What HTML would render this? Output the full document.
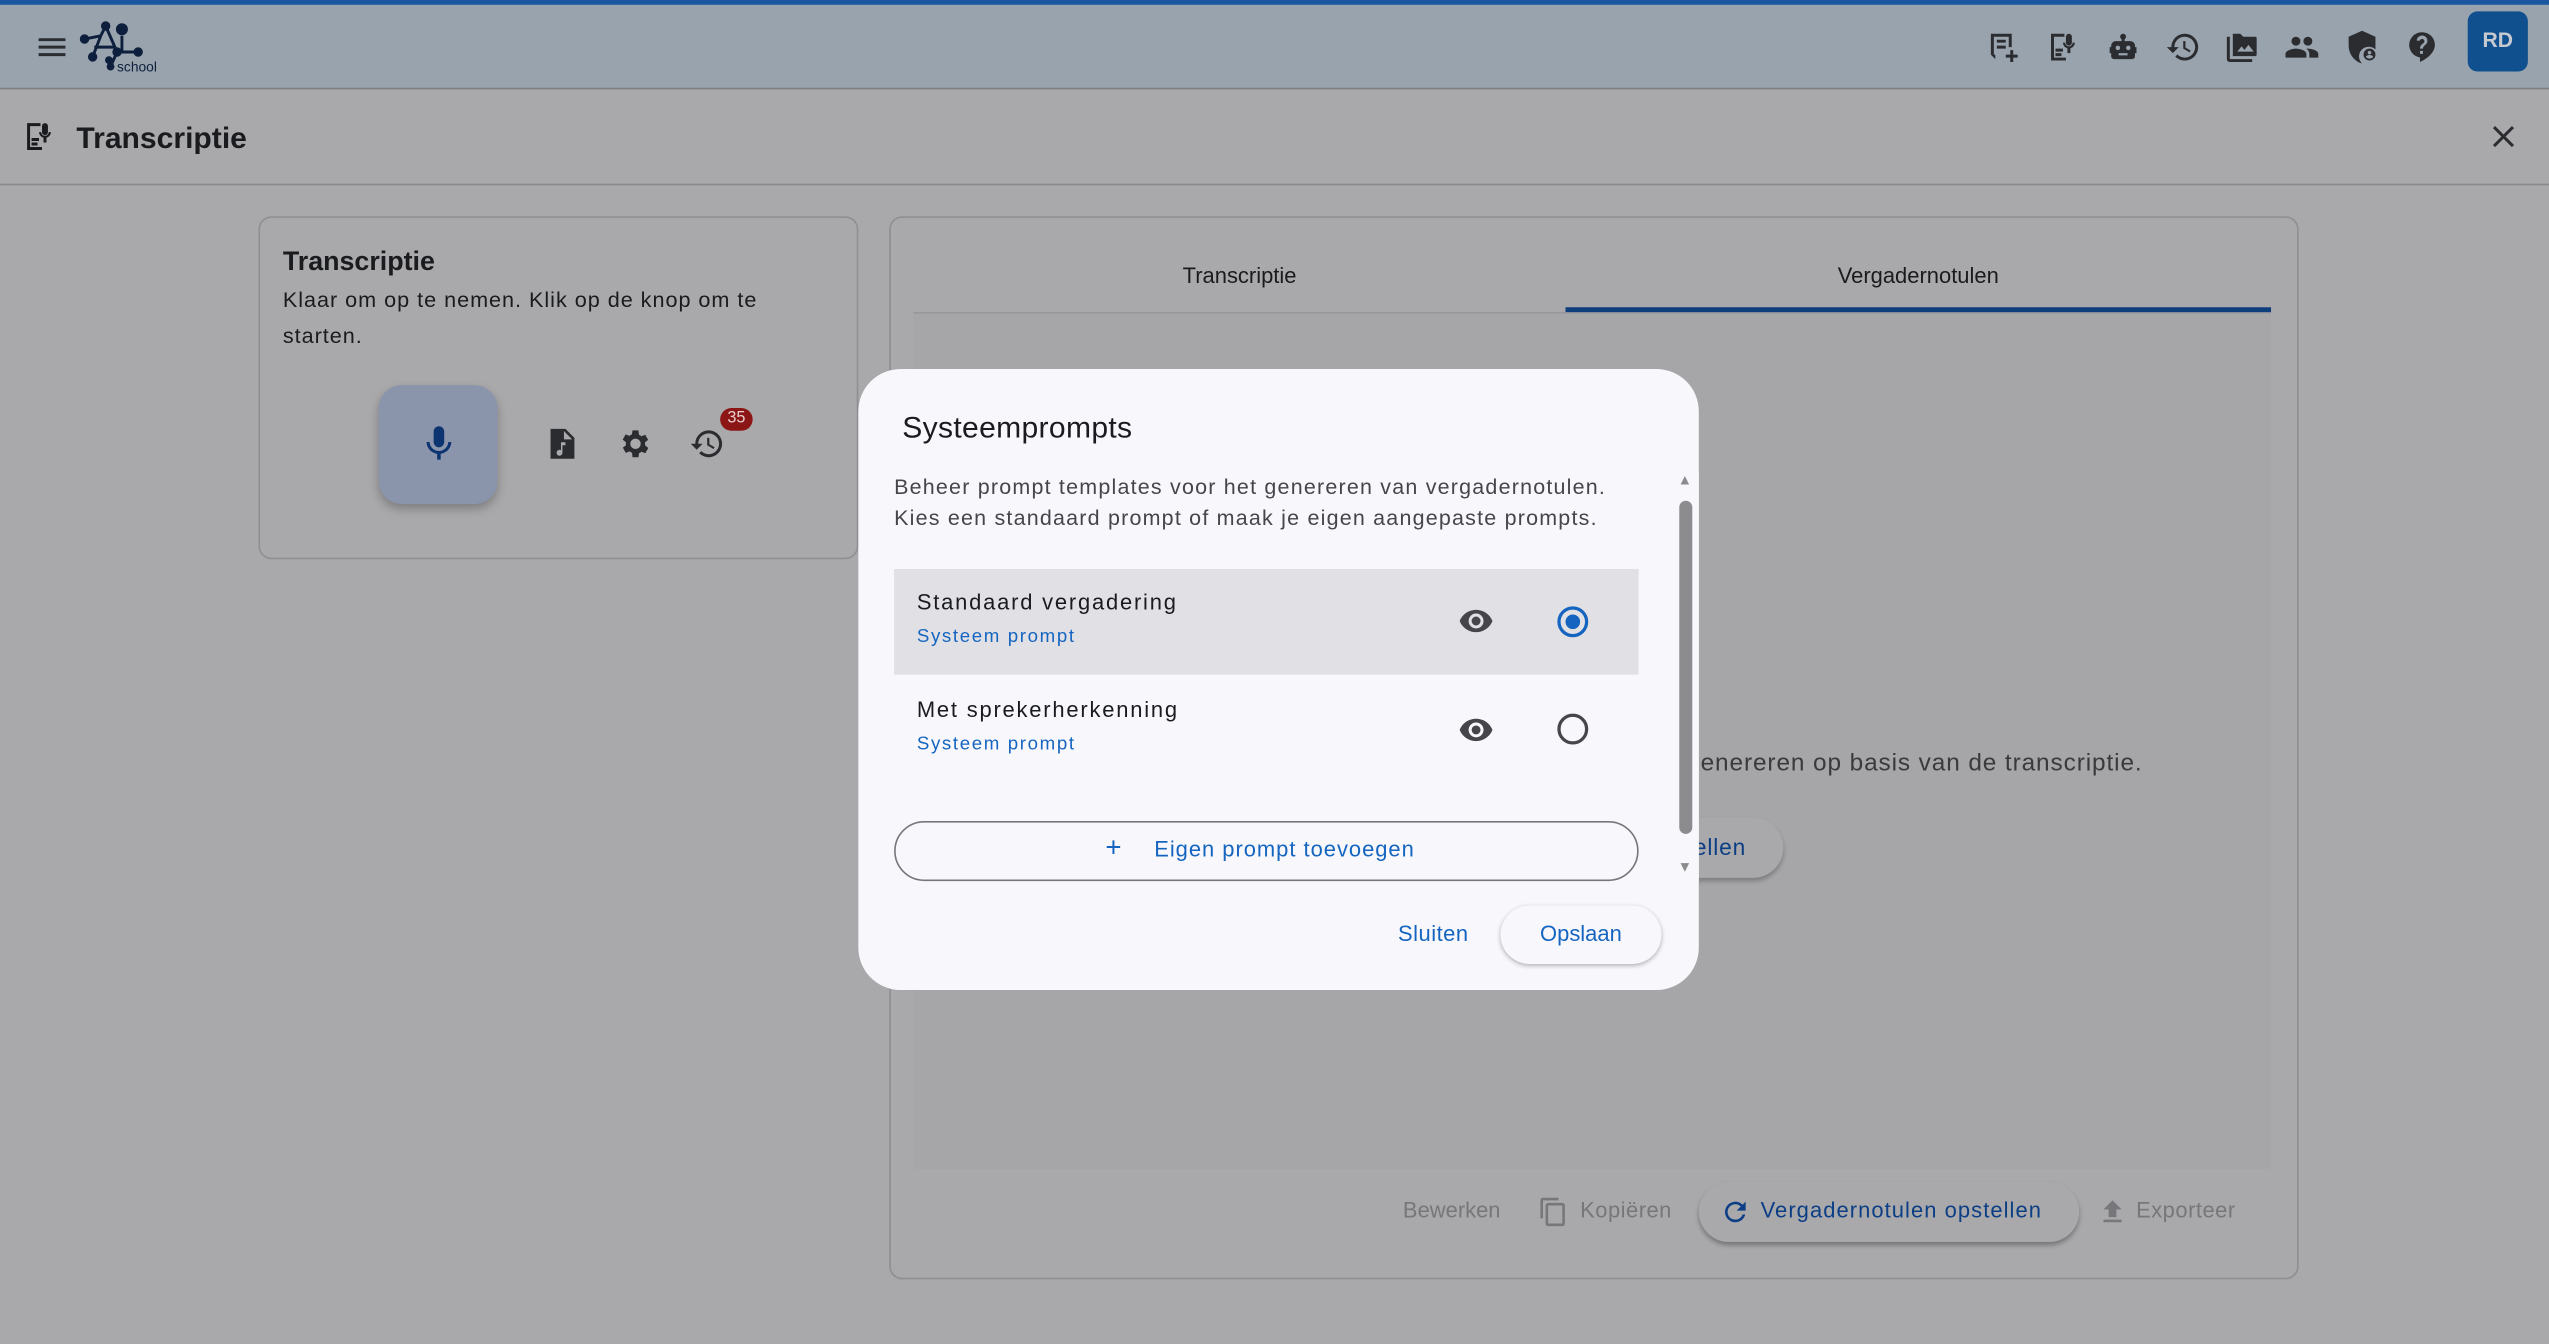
<!DOCTYPE html>
<html><head><meta charset="utf-8"><style>
*{box-sizing:border-box;margin:0;padding:0}
html,body{width:2549px;height:1344px;overflow:hidden;background:#a9a9ab;font-family:"Liberation Sans",sans-serif}
#w{position:absolute;left:0;top:0;width:1568px;height:827px;transform:scale(1.62564);transform-origin:0 0;background:#a9a9ab}
.a{position:absolute}
.ic{position:absolute;width:22px;height:22px;fill:#2b2c30}
.t{position:absolute;white-space:nowrap}
</style></head><body><div id="w">
<div class="a" style="left:0;top:0;width:1568px;height:3px;background:#1b56a1"></div>
<div class="a" style="left:0;top:3px;width:1568px;height:52px;background:#99a3ad;border-bottom:1px solid #7c7f84"></div>
<svg class="ic" style="left:21px;top:18px" viewBox="0 0 24 24"><path d="M3 6h18v2H3zm0 5h18v2H3zm0 5h18v2H3z"/></svg>
<svg class="a" style="left:48px;top:10px;width:54px;height:38px" viewBox="0 0 54 38"><g stroke="#0d1f3c" stroke-width="1.8" fill="#0d1f3c"><path d="M4 14 L14 12 M14 12 L9 25 M14 12 L17 6 M17 6 L24 22 M10 19 L22 19 M24 22 L20 31 M24 22 L37 22 M27 12 V22" fill="none"/><circle cx="4" cy="14" r="2"/><circle cx="17" cy="6" r="2"/><circle cx="9" cy="25" r="2"/><circle cx="27" cy="8" r="2.8"/><circle cx="37" cy="22" r="2"/><circle cx="24" cy="22" r="2"/><circle cx="19" cy="27" r="1.5"/><circle cx="20" cy="31" r="1.5"/></g><text x="24" y="34" font-size="8.5" fill="#0d1f3c" font-family="Liberation Sans">school</text></svg>
<svg class="ic" style="left:1221px;top:18px" viewBox="0 0 24 24"><path d="M4 3h14v9h-2V5H6v12H4zM8 7h6v2H8zm0 4h6v2H8zm9 3h2v3h3v2h-3v3h-2v-3h-3v-2h3zM4 17l3 3V17z"/></svg>
<svg class="ic" style="left:1258px;top:18px" viewBox="0 0 24 24"><path d="M4 3h9v2H6v14h8v2H4zM7 13h5v2H7zm0 3h4v2H7zm9-13a2 2 0 0 1 2 2v4a2 2 0 0 1-4 0V5a2 2 0 0 1 2-2zm-4 6h1.5a2.5 2.5 0 0 0 5 0H20a4 4 0 0 1-3 3.8V16h-2v-3.2A4 4 0 0 1 12 9z"/></svg>
<svg class="ic" style="left:1295px;top:18px" viewBox="0 0 24 24"><path d="M12 3a2 2 0 0 1 1 3.7V8h4a3 3 0 0 1 3 3v1h1v4h-1v2a2 2 0 0 1-2 2H6a2 2 0 0 1-2-2v-2H3v-4h1v-1a3 3 0 0 1 3-3h4V6.7A2 2 0 0 1 12 3zM8.5 11a1.5 1.5 0 1 0 0 3 1.5 1.5 0 0 0 0-3zm7 0a1.5 1.5 0 1 0 0 3 1.5 1.5 0 0 0 0-3zM9 16v1.5h6V16z"/></svg>
<svg class="ic" style="left:1332px;top:18px" viewBox="0 0 24 24"><path d="M13 3a9 9 0 0 0-9 9H1l4 4 4-4H6a7 7 0 1 1 2.05 4.95l-1.4 1.420A9 9 0 1 0 13 3zm-1 5v5l4.3 2.5.7-1.2-3.5-2.1V8z"/></svg>
<svg class="ic" style="left:1368px;top:18px" viewBox="0 0 24 24"><path d="M2 5h2v15h15v2H4a2 2 0 0 1-2-2zm4-2h5l2 2h8a1 1 0 0 1 1 1v11a1 1 0 0 1-1 1H6zm3 12h11l-3.5-4.5-2.7 3.3-1.9-2.3z"/></svg>
<svg class="ic" style="left:1405px;top:18px" viewBox="0 0 24 24"><path d="M16 11a3 3 0 1 0 0-6 3 3 0 0 0 0 6zm-8 0a3 3 0 1 0 0-6 3 3 0 0 0 0 6zm0 2c-2.3 0-7 1.2-7 3.5V19h14v-2.5C15 14.2 10.3 13 8 13zm8 0c-.3 0-.6 0-1 .1 1.2.8 2 2 2 3.4V19h6v-2.5c0-2.3-4.7-3.5-7-3.5z"/></svg>
<svg class="ic" style="left:1442px;top:18px" viewBox="0 0 24 24"><path d="M12 1 3 5v6c0 5.5 3.8 10.7 9 12-.1 0 0 0 0 0a6 6 0 0 1 9-9.5V5zm5 12a4 4 0 1 0 0 8 4 4 0 0 0 0-8zm0 1.5a1.2 1.2 0 1 1 0 2.4 1.2 1.2 0 0 1 0-2.4zm0 5.2c-1 0-1.9-.5-2.4-1.2.1-.8 1.6-1.2 2.4-1.2s2.300.4 2.4 1.2c-.5.7-1.4 1.2-2.4 1.2z"/></svg>
<svg class="ic" style="left:1479px;top:18px" viewBox="0 0 24 24"><path d="M11.5 2a8.5 8.5 0 0 0-1 16.9V22c4.5-2 10-6.2 10-11.5A8.5 8.5 0 0 0 11.5 2zm1 14.5h-2v-2h2zm0-3.5h-2c0-3.2 3-3 3-5a1.6 1.6 0 0 0-3.1-.4H8.3A3.5 3.5 0 0 1 15.5 8c0 2.5-3 2.8-3 5z"/></svg>
<div class="a" style="left:1518px;top:7px;width:37px;height:37px;border-radius:6px;background:#10508f;color:#c6cad0;font-weight:bold;font-size:13px;text-align:center;line-height:36px">RD</div>
<div class="a" style="left:0;top:56px;width:1568px;height:58px;border-bottom:1px solid #8a8a8c"></div>
<svg class="ic" style="left:13px;top:73px" viewBox="0 0 24 24"><path d="M4 3h9v2H6v14h8v2H4zM7 13h5v2H7zm0 3h4v2H7zm9-13a2 2 0 0 1 2 2v4a2 2 0 0 1-4 0V5a2 2 0 0 1 2-2zm-4 6h1.5a2.5 2.5 0 0 0 5 0H20a4 4 0 0 1-3 3.8V16h-2v-3.2A4 4 0 0 1 12 9z" fill="#1a1b1e"/></svg>
<div class="t" style="left:47px;top:74px;font-size:18.5px;font-weight:bold;color:#1a1b1e">Transcriptie</div>
<svg class="a" style="left:1530px;top:74px;width:20px;height:20px" viewBox="0 0 24 24"><path d="M5 5l14 14M19 5 5 19" stroke="#2b2c30" stroke-width="2.2"/></svg>
<div class="a" style="left:159px;top:133px;width:369px;height:211px;border:1px solid #8f8f92;border-radius:8px"></div>
<div class="t" style="left:174px;top:152px;font-size:16.5px;font-weight:bold;color:#1a1b1e">Transcriptie</div>
<div class="t" style="left:174px;top:174px;font-size:13.3px;color:#1a1b1e;line-height:22px;letter-spacing:.6px">Klaar om op te nemen. Klik op de knop om te<br>starten.</div>
<div class="a" style="left:233px;top:237px;width:73px;height:73px;border-radius:14px;background:#8a94aa;box-shadow:0 3px 6px rgba(0,0,0,.25)"></div>
<svg class="a" style="left:257px;top:260px;width:26px;height:26px" viewBox="0 0 24 24"><path d="M12 14a3 3 0 0 0 3-3V5a3 3 0 0 0-6 0v6a3 3 0 0 0 3 3zm5.3-3A5.3 5.3 0 0 1 12 16.1 5.3 5.3 0 0 1 6.7 11H5c0 3.4 2.7 6.2 6 6.7V21h2v-3.3c3.3-.5 6-3.3 6-6.7z" fill="#0c3470"/></svg>
<svg class="ic" style="left:335px;top:262px" viewBox="0 0 24 24"><path d="M6 2h8l6 6v14H4V2zm7 1.5V9h5.5zM14 11h-3v5.3a2 2 0 1 0 1 1.7V13h2z"/></svg>
<svg class="ic" style="left:379px;top:262px" viewBox="0 0 24 24"><path d="M19.4 13a7.7 7.7 0 0 0 0-2l2.1-1.6-2-3.5-2.5 1a7.3 7.3 0 0 0-1.7-1L15 3h-4l-.4 2.7a7.3 7.3 0 0 0-1.7 1l-2.5-1-2 3.5L6.6 11a7.7 7.7 0 0 0 0 2l-2.1 1.6 2 3.5 2.5-1c.5.4 1.1.7 1.7 1L11 21h4l.4-2.7c.6-.3 1.2-.6 1.7-1l2.5 1 2-3.5zM13 15.5a3.5 3.5 0 1 1 0-7 3.5 3.5 0 0 1 0 7z"/></svg>
<svg class="ic" style="left:424px;top:262px" viewBox="0 0 24 24"><path d="M13 3a9 9 0 0 0-9 9H1l4 4 4-4H6a7 7 0 1 1 2.05 4.95l-1.4 1.42A9 9 0 1 0 13 3zm-1 5v5l4.3 2.5.7-1.2-3.5-2.1V8z"/></svg>
<div class="a" style="left:443px;top:251px;width:20px;height:14px;border-radius:7px;background:#8c1515;color:#e8d0d0;font-size:10px;text-align:center;line-height:14px">35</div>
<div class="a" style="left:547px;top:133px;width:867px;height:654px;border:1px solid #8f8f92;border-radius:8px"></div>
<div class="t" style="left:562px;top:162px;width:401px;text-align:center;font-size:13.5px;color:#1a1b1e">Transcriptie</div>
<div class="t" style="left:963px;top:162px;width:434px;text-align:center;font-size:13.5px;color:#1a1b1e">Vergadernotulen</div>
<div class="a" style="left:562px;top:192px;width:835px;height:1px;background:#95959c"></div>
<div class="a" style="left:963px;top:189px;width:434px;height:3px;background:#0e3e7c"></div>
<div class="a" style="left:562px;top:193px;width:835px;height:526px;background:#a6a6a8"></div>
<div class="t" style="right:250px;top:461px;font-size:15px;color:#3a3a3e;letter-spacing:.55px">genereren op basis van de transcriptie.</div>
<div class="a" style="left:980px;top:503px;width:117px;height:37px;border-radius:19px;background:#a9a9ab;box-shadow:0 2px 3px rgba(0,0,0,.25)"></div>
<div class="t" style="left:1042px;top:513px;font-size:14px;color:#0c3e85;letter-spacing:.5px">ellen</div>
<div class="t" style="left:863px;top:737px;font-size:13.5px;color:#77777b">Bewerken</div>
<svg class="a" style="left:946px;top:736px;width:19px;height:19px" viewBox="0 0 24 24"><path d="M16 1H4a2 2 0 0 0-2 2v14h2V3h12zm3 4H8a2 2 0 0 0-2 2v14a2 2 0 0 0 2 2h11a2 2 0 0 0 2-2V7a2 2 0 0 0-2-2zm0 16H8V7h11z" fill="#77777b"/></svg>
<div class="t" style="left:972px;top:737px;font-size:13.5px;color:#77777b;letter-spacing:.3px">Kopiëren</div>
<div class="a" style="left:1045px;top:727px;width:234px;height:37px;border-radius:19px;background:#a9a9ab;box-shadow:0 2px 3px rgba(0,0,0,.3)"></div>
<svg class="a" style="left:1058px;top:736px;width:19px;height:19px" viewBox="0 0 24 24"><path d="M17.6 6.4A8 8 0 1 0 19.7 14h-2.1A6 6 0 1 1 12 6c1.7 0 3.1.7 4.2 1.8L13 11h7V4z" fill="#0c3e85"/></svg>
<div class="t" style="left:1083px;top:737px;font-size:13.5px;color:#0c3e85;letter-spacing:.65px">Vergadernotulen opstellen</div>
<svg class="a" style="left:1290px;top:736px;width:19px;height:19px" viewBox="0 0 24 24"><path d="M9 16h6v-6h4l-7-7-7 7h4zm-4 2h14v2H5z" fill="#77777b"/></svg>
<div class="t" style="left:1314px;top:737px;font-size:13.5px;color:#77777b;letter-spacing:.3px">Exporteer</div>
<!-- dialog -->
<div class="a" style="left:528px;top:227px;width:517px;height:382px;border-radius:26px;background:#f8f8fc"></div>
<div class="t" style="left:555px;top:252px;font-size:18.5px;color:#1a1b1e;letter-spacing:.2px">Systeemprompts</div>
<div class="t" style="left:550px;top:290px;font-size:13.2px;color:#46464a;line-height:19px;letter-spacing:.75px">Beheer prompt templates voor het genereren van vergadernotulen.<br>Kies een standaard prompt of maak je eigen aangepaste prompts.</div>
<div class="a" style="left:550px;top:350px;width:458px;height:65px;background:#e1e1e5"></div>
<div class="t" style="left:564px;top:363px;font-size:13.5px;color:#1a1b1e;letter-spacing:1.1px">Standaard vergadering</div>
<div class="t" style="left:564px;top:386px;font-size:11.5px;color:#1565c0;letter-spacing:1px">Systeem prompt</div>
<div class="t" style="left:564px;top:429px;font-size:13.5px;color:#1a1b1e;letter-spacing:1.1px">Met sprekerherkenning</div>
<div class="t" style="left:564px;top:452px;font-size:11.5px;color:#1565c0;letter-spacing:1px">Systeem prompt</div>
<svg class="a" style="left:897px;top:371px;width:22px;height:22px" viewBox="0 0 24 24"><path d="M12 4.5C7 4.5 2.7 7.6 1 12c1.7 4.4 6 7.5 11 7.5s9.3-3.1 11-7.5c-1.7-4.4-6-7.5-11-7.5zM12 17a5 5 0 1 1 0-10 5 5 0 0 1 0 10zm0-8a3 3 0 1 0 0 6 3 3 0 0 0 0-6z" fill="#46464a"/></svg>
<svg class="a" style="left:897px;top:438px;width:22px;height:22px" viewBox="0 0 24 24"><path d="M12 4.5C7 4.5 2.7 7.6 1 12c1.7 4.4 6 7.5 11 7.5s9.3-3.1 11-7.5c-1.7-4.4-6-7.5-11-7.5zM12 17a5 5 0 1 1 0-10 5 5 0 0 1 0 10zm0-8a3 3 0 1 0 0 6 3 3 0 0 0 0-6z" fill="#46464a"/></svg>
<div class="a" style="left:958px;top:373px;width:19px;height:19px;border-radius:50%;border:2px solid #1565c0"></div>
<div class="a" style="left:963px;top:378px;width:9px;height:9px;border-radius:50%;background:#1565c0"></div>
<div class="a" style="left:958px;top:439px;width:19px;height:19px;border-radius:50%;border:2px solid #46464a"></div>
<div class="a" style="left:550px;top:505px;width:458px;height:37px;border-radius:19px;border:1px solid #77777b"></div>
<div class="t" style="left:680px;top:512px;font-size:17px;color:#1565c0">+</div>
<div class="t" style="left:710px;top:515px;font-size:13.5px;color:#1565c0;letter-spacing:.6px">Eigen prompt toevoegen</div>
<div class="a" style="left:1030px;top:290px;width:15px;height:252px;background:#f8f8fc"></div>
<div class="a" style="left:1033px;top:308px;width:8px;height:205px;border-radius:4px;background:#8c8c8e"></div>
<div class="t" style="left:1032px;top:290px;font-size:9px;color:#8c8c8e">▲</div>
<div class="t" style="left:1032px;top:528px;font-size:9px;color:#8c8c8e">▼</div>
<div class="t" style="left:860px;top:567px;font-size:13.5px;color:#1565c0;letter-spacing:.3px">Sluiten</div>
<div class="a" style="left:923px;top:557px;width:99px;height:36px;border-radius:18px;background:#f8f8fc;box-shadow:0 1px 3px rgba(0,0,0,.3)"></div>
<div class="t" style="left:923px;top:567px;width:99px;text-align:center;font-size:13.5px;color:#1565c0">Opslaan</div>
</div></body></html>
